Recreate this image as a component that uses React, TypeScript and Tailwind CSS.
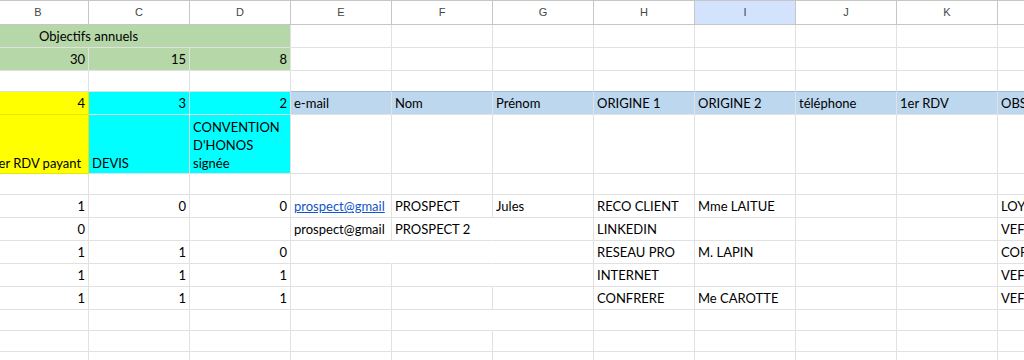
import React from "react";

type Cell = {
  t?: string;
  a?: "l" | "r" | "c";
  cls?: string;
  link?: boolean;
  noR?: boolean;
  w?: string;
};

const G = "bg-[#b6d7a8] border-[#a9c89b]";
const Y = "bg-[#ffff00] border-[#e6e600]";
const CY = "bg-[#00ffff] border-[#22e0e0]";
const BL = "bg-[#bdd7ee] border-[#a2bcd8]";

const cols = ["A", "B", "C", "D", "E", "F", "G", "H", "I", "J", "K", "L"];

const empty = (): Cell[] => cols.map(() => ({}));

function row(cells: Record<number, Cell>): Cell[] {
  return cols.map((_, i) => cells[i] ?? {});
}

const rows: { h: string; cells: Cell[]; tall?: boolean }[] = [
  {
    h: "h-[23px]",
    cells: [
      { t: "Objectifs annuels", a: "c", cls: G, w: "w-[404px]" },
      ...cols.slice(4).map(() => ({})),
    ],
  },
  {
    h: "h-[23px]",
    cells: row({
      0: { cls: G },
      1: { t: "30", a: "r", cls: G },
      2: { t: "15", a: "r", cls: G },
      3: { t: "8", a: "r", cls: G },
    }),
  },
  {
    h: "h-[21px]",
    cells: row({
      4: { cls: "border-b-[#a2bcd8]" },
      5: { cls: "border-b-[#a2bcd8]" },
      6: { cls: "border-b-[#a2bcd8]" },
      7: { cls: "border-b-[#a2bcd8]" },
      8: { cls: "border-b-[#a2bcd8]" },
      9: { cls: "border-b-[#a2bcd8]" },
      10: { cls: "border-b-[#a2bcd8]" },
      11: { cls: "border-b-[#a2bcd8]" },
    }),
  },
  {
    h: "h-[23px]",
    cells: row({
      0: { cls: Y },
      1: { t: "4", a: "r", cls: Y },
      2: { t: "3", a: "r", cls: CY },
      3: { t: "2", a: "r", cls: CY },
      4: { t: "e-mail", cls: BL },
      5: { t: "Nom", cls: BL },
      6: { t: "Prénom", cls: BL },
      7: { t: "ORIGINE 1", cls: BL },
      8: { t: "ORIGINE 2", cls: BL },
      9: { t: "téléphone", cls: BL },
      10: { t: "1er RDV", cls: BL },
      11: { t: "OBSERVATIONS", cls: BL },
    }),
  },
  {
    h: "h-[59px]",
    tall: true,
    cells: row({
      0: { cls: Y },
      1: { t: "1er RDV payant", cls: Y },
      2: { t: "DEVIS", cls: CY },
      3: { t: "CONVENTION\nD'HONOS\nsignée", cls: CY },
    }),
  },
  { h: "h-[21px]", cells: empty() },
  {
    h: "h-[23px]",
    cells: row({
      1: { t: "1", a: "r" },
      2: { t: "0", a: "r" },
      3: { t: "0", a: "r" },
      4: { t: "prospect@gmail", link: true },
      5: { t: "PROSPECT" },
      6: { t: "Jules" },
      7: { t: "RECO CLIENT" },
      8: { t: "Mme LAITUE" },
      11: { t: "LOYERS" },
    }),
  },
  {
    h: "h-[23px]",
    cells: row({
      1: { t: "0", a: "r" },
      4: { t: "prospect@gmail" },
      5: { t: "PROSPECT 2", noR: true },
      7: { t: "LINKEDIN" },
      11: { t: "VEFA" },
    }),
  },
  {
    h: "h-[23px]",
    cells: row({
      1: { t: "1", a: "r" },
      2: { t: "1", a: "r" },
      3: { t: "0", a: "r" },
      4: { noR: true },
      5: { noR: true },
      7: { t: "RESEAU PRO" },
      8: { t: "M. LAPIN" },
      11: { t: "COPROPRIETE" },
    }),
  },
  {
    h: "h-[23px]",
    cells: row({
      1: { t: "1", a: "r" },
      2: { t: "1", a: "r" },
      3: { t: "1", a: "r" },
      5: { noR: true },
      7: { t: "INTERNET" },
      11: { t: "VEFA" },
    }),
  },
  {
    h: "h-[23px]",
    cells: row({
      1: { t: "1", a: "r" },
      2: { t: "1", a: "r" },
      3: { t: "1", a: "r" },
      7: { t: "CONFRERE" },
      8: { t: "Me CAROTTE" },
      11: { t: "VEFA" },
    }),
  },
  { h: "h-[21px]", cells: row({ 5: { noR: true } }) },
  { h: "h-[21px]", cells: empty() },
  { h: "h-[23px]", cells: empty() },
];

function DataCell({ c, tall }: { c: Cell; tall?: boolean }) {
  const align =
    c.a === "r" ? "justify-end text-right" : c.a === "c" ? "justify-center text-center" : "justify-start text-left";
  return (
    <div
      className={`${c.w ?? "w-[101px]"} shrink-0 h-full flex items-end border-b border-r border-[#e1e1e1] px-[3px] pb-[1px] overflow-hidden ${align} ${
        c.noR ? "border-r-transparent" : ""
      } ${c.cls ?? "bg-white"}`}
    >
      {c.t && (
        <span
          className={`${tall ? "leading-[18px] whitespace-pre-line" : "leading-[19px] whitespace-nowrap"} ${
            c.link ? "text-[#1155cc] underline" : "text-black"
          }`}
        >
          {c.t}
        </span>
      )}
    </div>
  );
}

export default function App() {
  return (
    <div className="w-[1024px] h-[360px] overflow-hidden bg-white font-['Lato',sans-serif] text-[13px]">
      <div className="ml-[-113px] w-[1300px]">
        <div className="flex h-[25px] border-t border-[#c4c7c5]">
          {cols.map((l) => (
            <div
              key={l}
              className={`w-[101px] shrink-0 h-full flex items-center justify-center border-b border-r border-[#c4c7c5] font-['Liberation_Sans',Arial,sans-serif] text-[11px] text-[#444746] ${
                l === "I" ? "bg-[#d3e3fd]" : "bg-white"
              }`}
            >
              {l}
            </div>
          ))}
        </div>
        {rows.map((r, i) => (
          <div key={i} className={`flex ${r.h}`}>
            {r.cells.map((c, j) => (
              <DataCell key={j} c={c} tall={r.tall} />
            ))}
          </div>
        ))}
      </div>
    </div>
  );
}
